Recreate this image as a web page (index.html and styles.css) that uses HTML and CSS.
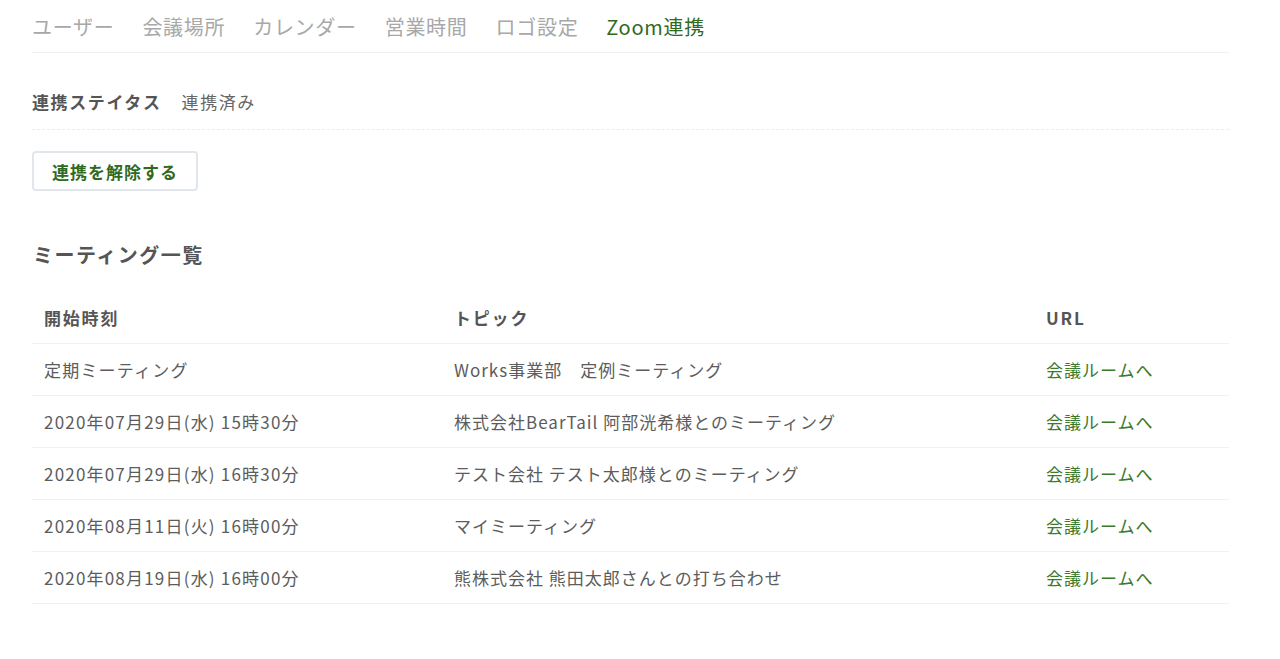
FILE: index.html
```html
<!doctype html>
<html>
<head>
    <title>Zoom連携</title>
    <link rel="stylesheet" href="styles.css">
</head>
<body>
    <div class="page">
        <div class="tabs">
            <a class="tab" href="#">ユーザー</a>
            <a class="tab" href="#">会議場所</a>
            <a class="tab" href="#">カレンダー</a>
            <a class="tab" href="#">営業時間</a>
            <a class="tab" href="#">ロゴ設定</a>
            <a class="tab active" href="#">Zoom連携</a>
        </div>

        <div class="status">
            <span class="status-label">連携ステイタス</span>
            <span class="status-value">連携済み</span>
        </div>

        <button class="unlink">連携を解除する</button>

        <h2>ミーティング一覧</h2>

        <table class="meetings">
            <thead>
                <tr>
                    <th class="col-time">開始時刻</th>
                    <th class="col-topic">トピック</th>
                    <th class="col-url">URL</th>
                </tr>
            </thead>
            <tbody>
                <tr>
                    <td>定期ミーティング</td>
                    <td>Works事業部　定例ミーティング</td>
                    <td><a href="#">会議ルームへ</a></td>
                </tr>
                <tr>
                    <td>2020年07月29日(水) 15時30分</td>
                    <td>株式会社BearTail 阿部洸希様とのミーティング</td>
                    <td><a href="#">会議ルームへ</a></td>
                </tr>
                <tr>
                    <td>2020年07月29日(水) 16時30分</td>
                    <td>テスト会社 テスト太郎様とのミーティング</td>
                    <td><a href="#">会議ルームへ</a></td>
                </tr>
                <tr>
                    <td>2020年08月11日(火) 16時00分</td>
                    <td>マイミーティング</td>
                    <td><a href="#">会議ルームへ</a></td>
                </tr>
                <tr>
                    <td>2020年08月19日(水) 16時00分</td>
                    <td>熊株式会社 熊田太郎さんとの打ち合わせ</td>
                    <td><a href="#">会議ルームへ</a></td>
                </tr>
            </tbody>
        </table>
    </div>
</body>
</html>
```

FILE: styles.css
```css
body {
    margin: 0;
    font-family: "Noto Sans CJK JP", "Noto Sans", sans-serif;
    color: #555;
    background-color: #fff;
}
.page {
    width: 1197px;
    margin-left: 32px;
}
.tabs {
    display: flex;
    gap: 28px;
    height: 53px;
    align-items: center;
    border-bottom: 1px solid #f0f0f0;
    box-sizing: border-box;
}
.tab {
    font-size: 20px;
    color: #a8a8a8;
    text-decoration: none;
    letter-spacing: 0.7px;
}
.tab.active {
    color: #2f6a1f;
}
.status {
    display: flex;
    align-items: center;
    gap: 20px;
    height: 77px;
    border-bottom: 1px dashed #ececec;
    padding-top: 20px;
    box-sizing: border-box;
}
.status-label {
    font-size: 17px;
    font-weight: bold;
    color: #555;
    letter-spacing: 1.6px;
}
.status-value {
    font-size: 17px;
    color: #666;
    letter-spacing: 1.6px;
}
.unlink {
    margin-top: 21px;
    height: 40px;
    width: 166px;
    background-color: #fff;
    border: 2px solid #e1e6ed;
    border-radius: 4px;
    color: #2f6a1f;
    font-family: inherit;
    font-size: 17px;
    font-weight: bold;
    letter-spacing: 1px;
    cursor: pointer;
}
h2 {
    font-size: 20px;
    font-weight: bold;
    color: #555;
    margin: 49px 0 0 1px;
    letter-spacing: 1.5px;
    line-height: 30px;
}
.meetings {
    width: 100%;
    border-collapse: collapse;
    margin-top: 22px;
    font-size: 17px;
    letter-spacing: 1px;
}
.meetings th,
.meetings td {
    text-align: left;
    padding: 0 12px;
    height: 51px;
    border-bottom: 1px solid #f1f1f1;
}
.meetings th {
    font-weight: bold;
    color: #555;
    letter-spacing: 1.8px;
}
.meetings td {
    color: #5c5c5c;
}
.meetings td:first-child {
    letter-spacing: 1.2px;
}
.col-time {
    width: 386px;
}
.col-topic {
    width: 568px;
}
.meetings a {
    color: #3a7a2a;
    text-decoration: none;
}
.meetings a:hover {
    text-decoration: underline;
}
```
